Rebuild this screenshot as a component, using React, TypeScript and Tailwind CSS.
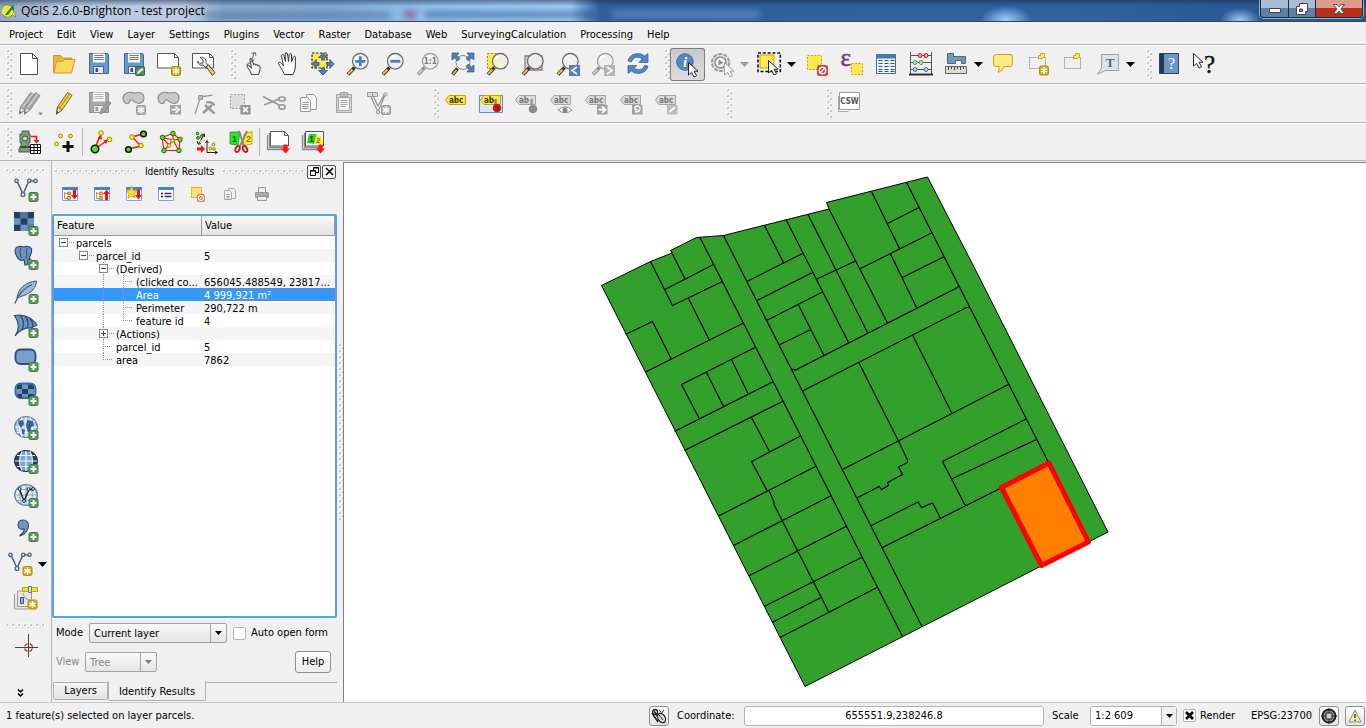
import type { ReactNode } from "react";
import clsx from "clsx";

type Tool = { label: string; icon: ReactNode; menu?: "on" | "off"; pressed?: boolean };

const MENUS = [
  "Project", "Edit", "View", "Layer", "Settings", "Plugins", "Vector", "Raster",
  "Database", "Web", "SurveyingCalculation", "Processing", "Help",
];

/* ---------- icon parts ---------- */

function PlusBadge() {
  return (
    <g>
      <rect x="15" y="14.500" width="9" height="9" rx="1.500" fill="#5b9a5b" stroke="#3f7a45" />
      <path d="M19.500 16v6M16.500 19h6" stroke="#fff" strokeWidth="2" />
    </g>
  );
}

function StarBadge({ gray, x = 14, y = 14 }: { gray?: boolean; x?: number; y?: number }) {
  return (
    <g transform={`translate(${x} ${y})`}>
      <rect x=".5" y=".5" width="9" height="9" rx="1.500" fill={gray ? "#b5b5b5" : "#d4aa14"} stroke={gray ? "#9a9a9a" : "#b58e08"} />
      <path d="M5 1.500v7M2 3.300l6 3.400M8 3.300L2 6.700" stroke="#fff" strokeWidth="1.400" />
    </g>
  );
}

function Cursor({ x, y, gray }: { x: number; y: number; gray?: boolean }) {
  return (
    <path
      transform={`translate(${x} ${y})`}
      d="M0 0v12.500l3-2.700 2.500 4.700 2.500-1.300L5.500 8.700h4z"
      fill="#fff"
      stroke={gray ? "#999" : "#222"}
      strokeWidth="1"
    />
  );
}

function Lens({ gray, children }: { gray?: boolean; children?: ReactNode }) {
  return (
    <g>
      <path d="M8.500 15.500L2 22.500" stroke={gray ? "#8f8f8f" : "#333"} strokeWidth="3.600" />
      <path d="M6.500 17.500L2.200 22" stroke={gray ? "#c8c8c8" : "#f0c040"} strokeWidth="2" />
      <circle cx="14.300" cy="9.300" r="7.800" fill="#f0f1ec" fillOpacity=".85" stroke={gray ? "#a0a0a0" : "#6d6d6d"} strokeWidth="1.300" />
      <path d="M9.500 7a5.500 5.500 0 0 1 6-3.500" fill="none" stroke="#fff" strokeWidth="1.500" />
      {children}
    </g>
  );
}

function Disk({ gray }: { gray?: boolean }) {
  return (
    <g>
      <path d="M2.500 1.500h18l1 1v19h-19z" fill={gray ? "#a8a8a8" : "#6a98cc"} stroke={gray ? "#8d8d8d" : "#44678f"} />
      <path d="M6 1.500h12v9H6z" fill="#f7f7f7" />
      <path d="M7.500 3.500h9M7.500 5.500h9M7.500 7.500h9" stroke={gray ? "#b5b5b5" : "#777"} />
      <path d="M6.500 14.500h10v7h-10z" fill="#e8e8e8" stroke={gray ? "#999" : "#44678f"} />
      <path d="M8.500 16h2.500v4H8.500z" fill={gray ? "#999" : "#34547c"} />
    </g>
  );
}

function Polyline() {
  return (
    <g fill="#f0f0f0" stroke="#48627f" strokeWidth="1.300">
      <path d="M3 3l6 13 6-13h6" fill="none" strokeWidth="1.500" />
      <circle cx="2.500" cy="2.800" r="1.700" />
      <circle cx="9" cy="16.500" r="1.900" />
      <circle cx="15.200" cy="2.800" r="1.700" />
      <circle cx="21.500" cy="2.800" r="1.700" />
    </g>
  );
}

function Tag({ gray, text = "abc", y = 3 }: { gray?: boolean; text?: string; y?: number }) {
  return (
    <g transform={`translate(0 ${y})`}>
      <path
        d="M1.500 6L5 1.500h16.500v9H5z"
        fill={gray ? "#dadada" : "#ffe83d"}
        stroke={gray ? "#a5a5a5" : "#c4a000"}
      />
      <text x="5" y="8.800" fontSize="8" fontWeight="bold" fontFamily="DejaVu Sans Condensed" fill={gray ? "#777" : "#3c3000"}>
        {text}
      </text>
    </g>
  );
}

function Blob() {
  return (
    <path
      d="M4 2.500c4-3 6 0 9-.5 5-1.500 9 .5 9 5s-3.500 6-7 5c-3-.8-4-4-6.500-3-1.500 1-.5 3-2.500 3.500C3 13 1 10 1 7s1-3.500 3-4.500z"
      fill="#c8c8c8"
      stroke="#8f8f8f"
      strokeWidth="1.200"
    />
  );
}

function Node({ x, y, green, r = 2.3 }: { x: number; y: number; green?: boolean; r?: number }) {
  return <circle cx={x} cy={y} r={r} fill={green ? "#59e01c" : "#ffee22"} stroke={green ? "#1c5c08" : "#8a8200"} strokeWidth=".9" />;
}

function Globe({ dark, light }: { dark?: boolean; light?: boolean }) {
  return (
    <g>
      <ellipse cx="12" cy="11" rx="11.300" ry="10.300" fill={light ? "#e9eff6" : dark ? "#24405f" : "#b9cce2"} stroke={dark ? "#1e3550" : "#5b84b5"} strokeWidth="1.300" />
      {dark && <path d="M8 1.500h8q4 9.500 0 19H8q-4-9.500 0-19z" fill="#7da4d4" />}
      <path
        d="M12 1v20M1 11h22M3 5.500h18M3 16.500h18M8 1.500q-5 9.500 0 19M16 1.500q5 9.500 0 19"
        fill="none"
        stroke={light ? "#86acd8" : "#f2f6fb"}
        strokeWidth="1.200"
      />
    </g>
  );
}

function Stacked() {
  return <path d="M1.500 5v14.500H20M3.500 3v14.500h18" fill="none" stroke="#888" strokeWidth="1.300" />;
}

const RedDown = () => <path d="M17.500 14.500h4v4h2.500l-4.500 5-4.500-5h2.500z" fill="#f11" />;

/* ---------- toolbars ---------- */

const FILE_TOOLS: Tool[] = [
  {
    label: "New Project",
    icon: <path d="M3.500 1.500h12l5 5v16h-17zM15.500 1.500v5h5" fill="#fff" stroke="#4d4d4d" />,
  },
  {
    label: "Open Project",
    icon: (
      <g stroke="#c89a2a">
        <path d="M1.500 20.500v-17h7l2 2.500h9v14z" fill="#e3b640" />
        <path d="M2 21L4.500 9.500h6l1.500-2h11L19.500 21z" fill="#fbd762" />
      </g>
    ),
  },
  { label: "Save Project", icon: <Disk /> },
  {
    label: "Save Project As",
    icon: (
      <g>
        <Disk />
        <rect x="13.500" y="14.500" width="9" height="9" rx="1" fill="#4d8a57" stroke="#35693f" />
        <path d="M15 22l1-3 4-3 1.500 1.500-4 3.500z" fill="#fff" />
      </g>
    ),
  },
  {
    label: "New Print Composer",
    icon: (
      <g>
        <path d="M.5 1.500h17l4 4v10.500H.5zM17.500 1.500v4h4" fill="#fff" stroke="#555" />
        <StarBadge />
      </g>
    ),
  },
  {
    label: "Composer Manager",
    icon: (
      <g>
        <path d="M.5 1.500h17l4 4v10.500H.5zM17.500 1.500v4h4" fill="#fff" stroke="#555" />
        <path d="M8 5.500l3 2.500v3l-3 .5L5.500 9c0 3 2.500 5 5.500 4l3 3 2.500-2.500-2.500-3C15 7 11 4.500 8 5.500z" fill="#e6e6e6" stroke="#444" strokeWidth=".9" />
        <path d="M14 14.500l2.500-1.500 6.500 7.500-2.500 3z" fill="#f3cf55" stroke="#444" />
      </g>
    ),
  },
];

const NAV_TOOLS: Tool[] = [
  {
    label: "Touch Zoom and Pan",
    icon: (
      <g fill="none" stroke="#555" strokeWidth="1.100">
        <path d="M10.500 22.500C9.500 19 8 17 6 14.500c0-1.500 1.500-1.500 2.500-.5l2 2L9 7.500c0-1.500 1.500-1.500 2 0l1.500 5c1-1 2-.7 2.300.5 1-.7 2-.3 2.200.8 1.200-.4 1.800.2 2 1.200.6 3-.5 5-1.500 7.500z" fill="#f7f7f7" />
        <path d="M13 1l-2.500 8M10.500 1.500L14 .5l1 3M5.500 13l8-5.500" stroke="#777" />
      </g>
    ),
  },
  {
    label: "Pan Map",
    icon: (
      <path
        d="M8 21.500C6 17 3.500 14 2.500 11.500c0-1.500 2-1.500 3 0l2 2.500L5.500 4c0-1.800 2-1.800 2.500-.5L9.500 9.500 9 2c0-1.800 2.200-1.800 2.500 0l1 7.500L13.300 2.500c.3-1.500 2.200-1.300 2.200.4L15.500 10l1.800-5c.7-1.300 2.400-.8 2.200.8C19 12 20.500 16 17 22.500H8.500z"
        fill="#fff"
        stroke="#333"
      />
    ),
  },
  {
    label: "Pan Map to Selection",
    icon: (
      <g>
        <path d="M1 1h15v15H1z" fill="#ffe950" stroke="#222" strokeWidth="1.200" strokeDasharray="2.500 1.500" />
        <g fill="#4f80b8" stroke="#2d5785" strokeWidth=".8">
          <path d="M12 1l4.500 4.500h-3V8h-3V5.500h-3z" />
          <path d="M12 23l4.500-4.500h-3V16h-3v2.500h-3z" />
          <path d="M.8 12l4.500-4.500v3h2.700v3H5.300v3z" />
          <path d="M23.200 12l-4.500-4.500v3H16v3h2.700v3z" />
        </g>
      </g>
    ),
  },
  { label: "Zoom In", icon: <Lens><path d="M14.300 4.300v10M9.300 9.300h10" stroke="#4b7cb8" strokeWidth="2.800" /></Lens> },
  { label: "Zoom Out", icon: <Lens><path d="M9.300 9.300h10" stroke="#4b7cb8" strokeWidth="2.800" /></Lens> },
  {
    label: "Zoom to Native Pixel Resolution",
    icon: <Lens gray><text x="14.300" y="12.300" textAnchor="middle" fontSize="8" fontFamily="DejaVu Sans Condensed" fontWeight="bold" fill="#777">1:1</text></Lens>,
  },
  {
    label: "Zoom Full",
    icon: (
      <g>
        <circle cx="12" cy="10.500" r="7" fill="#f0f1ec" stroke="#888" />
        <path d="M6.500 16.500L1.500 22.500" stroke="#333" strokeWidth="3.600" />
        <path d="M5.500 18L2 22" stroke="#f0c040" strokeWidth="1.800" />
        <g fill="#4f80b8" stroke="#2d5785" strokeWidth=".7">
          <path d="M1 1h7L6 3.500l3 3-2.500 2.500-3-3L1 8z" />
          <path d="M23 1h-7l2 2.500-3 3L17.500 9l3-3L23 8z" />
          <path d="M23 20h-7l2-2.500-3-3 2.500-2.500 3 3L23 13z" />
        </g>
      </g>
    ),
  },
  {
    label: "Zoom to Selection",
    icon: <g><path d="M1.500 1.500h17v15h-17z" fill="#ffe950" stroke="#a88a00" strokeDasharray="2 1.500" /><Lens /></g>,
  },
  {
    label: "Zoom to Layer",
    icon: <g><path d="M4 4h17v14H4z" fill="#ddd0dd" stroke="#8c7a8c" strokeWidth="1.300" /><Lens /></g>,
  },
  {
    label: "Zoom Last",
    icon: <g><Lens /><path d="M13 13h11v11H13z" fill="#4f80b8" /><path d="M21 15l-5 3.500 5 3.500" fill="none" stroke="#fff" strokeWidth="1.700" /></g>,
  },
  {
    label: "Zoom Next",
    icon: <g><Lens gray /><path d="M13 13h11v11H13z" fill="#b3b3b3" /><path d="M16 15l5 3.500-5 3.500" fill="none" stroke="#fff" strokeWidth="1.700" /></g>,
  },
  {
    label: "Refresh",
    icon: (
      <g fill="#4f86c6" stroke="#2f639f" strokeWidth=".7">
        <path d="M2 9C3 2 13-1 18.500 4L22 1.500v9h-9L16 7C12 4 7 5 5.500 10z" />
        <path d="M22 14c-1 7-11 10-16.500 5L2 21.500v-8h9L8 16c4 3 9 2 10.500-2.500z" />
      </g>
    ),
  },
];

const SquareYellow = ({ x = 3, y = 3, s = 14 }: { x?: number; y?: number; s?: number }) => (
  <rect x={x + 0.5} y={y + 0.5} width={s} height={s} fill="#ffe950" stroke="#c9a30d" strokeDasharray="2 1.500" />
);

const ForbidBadge = () => (
  <g>
    <rect x="13" y="13" width="11" height="11" rx="2.500" fill="#d93a3a" />
    <circle cx="18.500" cy="18.500" r="3.200" fill="none" stroke="#fff" strokeWidth="1.400" />
    <path d="M16.300 20.700l4.400-4.400" stroke="#fff" strokeWidth="1.400" />
  </g>
);

const ATTR_TOOLS: Tool[] = [
  {
    label: "Identify Features",
    pressed: true,
    icon: (
      <g>
        <circle cx="10" cy="10" r="8.300" fill="#5488c4" stroke="#416fa6" />
        <text x="10" y="15" textAnchor="middle" fontSize="15" fontStyle="italic" fontWeight="bold" fontFamily="Liberation Serif" fill="#fff">i</text>
        <Cursor x={13.5} y={10.5} />
      </g>
    ),
  },
  {
    label: "Run Feature Action",
    menu: "off",
    icon: (
      <g>
        <circle cx="10.500" cy="10.500" r="8.600" fill="#e3e3e3" stroke="#9a9a9a" strokeWidth="2" strokeDasharray="4 1.400" />
        <circle cx="10.500" cy="10.500" r="5.500" fill="#f5f5f5" stroke="#8d8d8d" strokeWidth="1.500" />
        <path d="M8.500 7.500l5 3-5 3z" fill="#8d8d8d" />
        <Cursor x={14.5} y={10.5} gray />
      </g>
    ),
  },
  {
    label: "Select Features",
    menu: "on",
    icon: (
      <g>
        <path d="M1 1h22.300v18.500H1z" fill="none" stroke="#111" strokeWidth="1.600" strokeDasharray="3 1.800" />
        <path d="M3 3h14v13H3z" fill="#ffe950" stroke="#c9a30d" />
        <Cursor x={11.5} y={8.5} />
      </g>
    ),
  },
  { label: "Deselect Features", icon: <g><SquareYellow /><ForbidBadge /></g> },
  {
    label: "Select by Expression",
    icon: (
      <g>
        <text x="1.500" y="14" fontSize="25" fontFamily="Liberation Serif" fill="#6a3a78" stroke="#6a3a78" strokeWidth=".5">ε</text>
        <SquareYellow x={12} y={11} s={11} />
      </g>
    ),
  },
  {
    label: "Open Attribute Table",
    icon: (
      <g>
        <path d="M2.500 2.500h19v19h-19z" fill="#eaf2f8" stroke="#4a6f90" />
        <path d="M2.500 2.500h19v4h-19z" fill="#4a7ba8" />
        <path d="M4.500 8.500h4m2 0h4m2 0h4M4.500 11.500h4m2 0h4m2 0h4M4.500 14.500h4m2 0h4m2 0h4M4.500 17.500h4m2 0h4m2 0h4M4.500 19.500h4m2 0h4m2 0h4" stroke="#34536e" />
      </g>
    ),
  },
  {
    label: "Field Calculator",
    icon: (
      <g fill="#f0f0f0">
        <path d="M1.500 0v22M22.500 0v22M1 3.500h22M1 10.500h22M1 17.500h22" stroke="#555" />
        <path d="M0 22.500h24" stroke="#333" strokeWidth="2" />
        <g stroke="#b02020" fill="#f6a0a0"><circle cx="11" cy="3.500" r="2" /><circle cx="17" cy="3.500" r="2" /></g>
        <g stroke="#4a9a50" fill="#b8e8b8"><circle cx="6" cy="10.500" r="2" /><circle cx="12" cy="10.500" r="2" /></g>
        <g stroke="#3c6c9c" fill="#b0d4f0"><circle cx="6" cy="17.500" r="2" /><circle cx="17" cy="17.500" r="2" /></g>
      </g>
    ),
  },
  {
    label: "Measure Line",
    menu: "on",
    icon: (
      <g>
        <path d="M3.500 1.500h6v3h12v7h-4v-3h-6v3h-8z" fill="#7399b8" stroke="#46688a" />
        <path d="M1.500 14.500h21v7h-21z" fill="#d9d9cd" stroke="#666" />
        <path d="M4.500 15v3M7.500 15v2M10.500 15v3M13.500 15v2M16.500 15v3M19.500 15v2" stroke="#444" />
      </g>
    ),
  },
  {
    label: "Map Tips",
    icon: <path d="M5 2.500h14q2.500 0 2.500 2.500v7q0 2.500-2.500 2.500h-6q-1 4.500-6 6 1.500-3 1-6H5q-2.500 0-2.500-2.500V5q0-2.500 2.500-2.500z" fill="#faec80" stroke="#c9a30d" />,
  },
  {
    label: "New Bookmark",
    icon: (
      <g>
        <path d="M3.500 5.500h16v11h-16z" fill="none" stroke="#777" strokeDasharray="1 1" />
        <path d="M12.500 3.500h2v-2h4v3l-2 2h-4z" fill="#ffe950" stroke="#c9a30d" />
        <StarBadge x={13} y={13.5} />
      </g>
    ),
  },
  {
    label: "Show Bookmarks",
    icon: (
      <g>
        <path d="M3.500 5.500h16v11h-16z" fill="none" stroke="#777" strokeDasharray="1 1" />
        <path d="M12.500 3.500h2v-2h4v3l-2 2h-4z" fill="#ffe950" stroke="#c9a30d" />
      </g>
    ),
  },
  {
    label: "Text Annotation",
    menu: "on",
    icon: (
      <g>
        <path d="M5.500 2.500h17v16h-13L1.500 22l4-6z" fill="#dbe4ea" stroke="#9aa3aa" />
        <text x="14" y="15" textAnchor="middle" fontSize="13" fontFamily="Liberation Serif" fontWeight="bold" fill="#666">T</text>
      </g>
    ),
  },
];

const HELP_TOOLS: Tool[] = [
  {
    label: "Help Contents",
    icon: (
      <g>
        <path d="M2.500 1.500h19v20h-19z" fill="#6a96c8" stroke="#2e4660" />
        <path d="M3 2h4v19H3z" fill="#223a54" />
        <text x="14.500" y="17" textAnchor="middle" fontSize="16" fontFamily="Liberation Serif" fill="#fff">?</text>
      </g>
    ),
  },
  {
    label: "What's This?",
    icon: (
      <g>
        <Cursor x={1.5} y={1.5} />
        <text x="12" y="21" fontSize="25" fontFamily="Liberation Serif" fill="#111" stroke="#111" strokeWidth=".4">?</text>
      </g>
    ),
  },
];

const Pencil = ({ gray, x = 0 }: { gray?: boolean; x?: number }) => (
  <g transform={`translate(${x} 0)`} strokeWidth=".9" stroke={gray ? "#888" : "#6b5a1c"}>
    <path d="M4.500 23l1-7L15.500 1.500l4.500 3L10 19z" fill={gray ? "#a6a6a6" : "#f2d43c"} />
    <path d="M7.500 17L17.500 3" stroke={gray ? "#c8c8c8" : "#c9a520"} strokeWidth="1.500" />
    <path d="M5.500 16l4.500 3-5.500 4z" fill={gray ? "#ddd" : "#f1e2c0"} />
    <path d="M4.500 23l.4-2.500 1.600 1z" fill="#333" />
  </g>
);

const EDIT_TOOLS: Tool[] = [
  {
    label: "Current Edits",
    icon: <g><Pencil gray x={-2} /><Pencil gray x={3} /><path d="M21 21.500h5l-2.500 3z" fill="#888" /></g>,
  },
  { label: "Toggle Editing", icon: <Pencil /> },
  {
    label: "Save Layer Edits",
    icon: <g><Disk gray /><path d="M13 23l1.500-5 6.500-8 3 2-6.500 9z" fill="#a0a0a0" stroke="#888" /></g>,
  },
  { label: "Add Feature", icon: <g><Blob /><StarBadge gray /></g> },
  {
    label: "Move Feature",
    icon: <g><Blob /><path d="M13 14h11v9.500H13z" fill="#a3a3a3" /><path d="M14.500 18.700h5M18.500 15.500l3.500 3.200-3.500 3.200" stroke="#fff" strokeWidth="1.800" fill="none" /></g>,
  },
  {
    label: "Node Tool",
    icon: (
      <g stroke="#999" fill="none">
        <path d="M3 23L8.500 6l12-2" strokeWidth="1.300" />
        <rect x="6.500" y="4.500" width="4" height="4" fill="#bbb" />
        <path d="M11 22l9-8M13 14l9.500 8.500" strokeWidth="2.400" />
        <path d="M14 11.500q6-1.500 8.500 3" strokeWidth="2" />
      </g>
    ),
  },
  {
    label: "Delete Selected",
    icon: (
      <g>
        <path d="M3.500 3.500h14v14h-14z" fill="#ddd" stroke="#999" strokeDasharray="2 1.500" />
        <path d="M13.500 14h10v9.500h-10z" fill="#909090" />
        <path d="M16 16.200l5 5M21 16.200l-5 5" stroke="#fff" strokeWidth="1.700" />
      </g>
    ),
  },
  {
    label: "Cut Features",
    icon: (
      <g fill="none" stroke="#999" strokeWidth="1.700">
        <path d="M1 5.500l17 9M2 14l15-6" />
        <ellipse cx="20" cy="8" rx="3.200" ry="2" />
        <ellipse cx="20" cy="16" rx="3.200" ry="2.200" />
      </g>
    ),
  },
  {
    label: "Copy Features",
    icon: (
      <g fill="#f6f6f6" stroke="#999">
        <path d="M9.500 3.500h7l3 3v12h-10z" />
        <path d="M3.500 6.500h7l3 3v11h-10z" />
        <path d="M5.500 11.500h6M5.500 13.500h6M5.500 15.500h6M5.500 17.500h6" />
      </g>
    ),
  },
  {
    label: "Paste Features",
    icon: (
      <g fill="#f6f6f6" stroke="#a5a5a5">
        <path d="M4.500 3.500h15v18h-15z" fill="#d8d8d8" />
        <path d="M6.500 6.500h11v13h-11z" />
        <path d="M8.500 1.500h7v4h-7z" fill="#bbb" />
        <path d="M8.500 9.500h7M8.500 11.500h7M8.500 13.500h7M8.500 15.500h5" />
      </g>
    ),
  },
  {
    label: "Rotate Feature",
    icon: (
      <g fill="#ddd" stroke="#999">
        <path d="M.5 1.500h5v4h-5zM5.500 1.500h5v4h-5z" />
        <path d="M4 6l7 15 7-17M6 5l5 10 6-11" fill="none" strokeWidth="1.300" />
        <circle cx="11" cy="21" r="1.700" /><circle cx="18.500" cy="3.500" r="1.700" />
        <StarBadge gray />
      </g>
    ),
  },
];

const LABEL_TOOLS: Tool[] = [
  { label: "Layer Labeling Options", icon: <Tag /> },
  {
    label: "Highlight Pinned Labels",
    icon: (
      <g>
        <path d="M.5 4.500h23v17H.5z" fill="#dce8f6" stroke="#5590e0" />
        <Tag text="ab" />
        <path d="M16.500 8v6" stroke="#888" strokeWidth="2.500" /><circle cx="18" cy="17" r="4.300" fill="#b81818" />
      </g>
    ),
  },
  {
    label: "Pin/Unpin Labels",
    icon: <g><Tag gray text="ab" /><path d="M17.500 8v6" stroke="#999" strokeWidth="2.500" /><circle cx="19" cy="18" r="4.300" fill="#8d8d8d" /></g>,
  },
  {
    label: "Show/Hide Labels",
    icon: <g><Tag gray /><path d="M9 19q7-6.500 14 0-7 5.500-14 0z" fill="#fff" stroke="#888" /><circle cx="16" cy="19" r="2.500" fill="#888" /></g>,
  },
  {
    label: "Move Label",
    icon: <g><Tag gray /><path d="M13 14h10.500v9.500H13z" fill="#a3a3a3" /><path d="M14.500 18.700h5M18 15.500l3.500 3.200-3.500 3.200" stroke="#fff" strokeWidth="1.700" fill="none" /></g>,
  },
  {
    label: "Rotate Label",
    icon: <g><Tag gray /><path d="M13 14h10.500v9.500H13z" fill="#a3a3a3" /><path d="M16 21q5 0 5-3.500a2.500 2.500 0 0 0-5 0q0 1.500 2.500 1.500" stroke="#fff" strokeWidth="1.400" fill="none" /></g>,
  },
  {
    label: "Change Label",
    icon: <g><Tag gray /><path d="M13 14h10.500v9.500H13z" fill="#bcbcbc" /><path d="M15 21.500l1-2.500 4-3.500 1.500 1.500-4 3.500z" fill="#fff" /></g>,
  },
];

const CSW_TOOLS: Tool[] = [
  {
    label: "MetaSearch",
    icon: (
      <g>
        <path d="M1.500 5v15.500h10" fill="#fff" stroke="#aaa" />
        <path d="M2.500 1.500h20v17h-20z" fill="#fff" stroke="#999" />
        <text x="12.500" y="13" textAnchor="middle" fontSize="8" fontFamily="DejaVu Sans Condensed" fontWeight="bold" fill="#555">CSW</text>
      </g>
    ),
  },
];

const SURVEY_TOOLS: Tool[][] = [
  [
    {
      label: "Load Fieldbook",
      icon: (
        <g>
          <path d="M5 1h7v3h1v9h-2l3 6v3H2v-3l3-6H3V4h2z" fill="#7d9a7d" stroke="#4a644a" />
          <circle cx="8" cy="8.500" r="2.500" fill="#c8dcc8" stroke="#3c523c" />
          <path d="M3 17h10" stroke="#3c523c" strokeWidth="2" />
          <path d="M14 6.500h5.500V11" fill="none" stroke="#f11" strokeWidth="1.700" />
          <path d="M16.500 10h6l-3 3.500z" fill="#f11" />
          <path d="M13.500 14.500h10v9h-10zM13.500 17.500h10M13.500 20.500h10M17 14.500v9M20.500 14.500v9" fill="#fff" stroke="#111" />
        </g>
      ),
    },
    {
      label: "Add New Point",
      icon: <g><Node x={8.5} y={6} r={1.9} /><Node x={18.5} y={6} r={1.9} /><Node x={4.5} y={14} r={1.9} /><path d="M16 11v11M10.500 16.500h11" stroke="#111" strokeWidth="3" /></g>,
    },
  ],
  [
    {
      label: "Single Point Calculations",
      icon: (
        <g>
          <path d="M6 18l5-12M7 18l12-8" stroke="#f11" strokeWidth="1.500" />
          <path d="M8.500 8.500L12 4l1 5.500zM14.500 10.500l5-1.500-2.500 5z" fill="#f11" />
          <Node x={12} y={3} /><Node x={20.5} y={9.5} />
          <circle cx="6" cy="19" r="3.700" fill="#59e01c" stroke="#111" strokeWidth="1.600" />
        </g>
      ),
    },
    {
      label: "Traverse Calculations",
      icon: (
        <g>
          <path d="M19 4L8 7l9 9-12 3" fill="none" stroke="#f11" strokeWidth="1.500" />
          <circle cx="19.500" cy="4" r="2.800" fill="#59e01c" stroke="#111" strokeWidth="1.500" />
          <circle cx="4.500" cy="19.500" r="2.800" fill="#59e01c" stroke="#111" strokeWidth="1.500" />
          <Node x={8} y={7} /><Node x={17} y={15.5} />
        </g>
      ),
    },
    {
      label: "Network Adjustment",
      icon: (
        <g>
          <path d="M14 3.500L3 7.500l2 13h15l1-11zM3 7.500l11 2.500 6 11M14 3.500V10l7-1M14 10l-4 5-7-7.500M10 15l-5 5.500" fill="none" stroke="#f11" strokeWidth="1.200" />
          <Node x={14} y={3.5} green /><Node x={3.5} y={7.5} green /><Node x={21} y={9.5} green /><Node x={5} y={20.5} green /><Node x={20} y={20.5} green />
          <Node x={13.5} y={10.5} r={1.8} /><Node x={10} y={15.5} r={1.8} />
        </g>
      ),
    },
    {
      label: "Coordinate Transformation",
      icon: (
        <g>
          <Node x={3.5} y={3.5} green r={1.4} /><Node x={7.5} y={6.5} green r={1.4} /><Node x={4} y={8} green r={1.4} />
          <path d="M4.500 14l6-10M10.500 4l-3 .5M10.500 4v3M3 11l1 3.500 3-1" stroke="#222" fill="none" strokeDasharray="3 1" />
          <path d="M3 17.500h4V15l4 4-4 4v-2.500H3z" fill="#f11" />
          <path d="M13 11v11.500h10M11.500 13l1.500-2.500 1.500 2.500M21 21l2.500 1.500L21 24" stroke="#222" fill="none" />
          <Node x={19.5} y={14.5} r={1.5} /><Node x={16.5} y={18.5} r={1.5} /><Node x={20} y={19} r={1.3} />
        </g>
      ),
    },
    {
      label: "Polygon Division",
      icon: (
        <g>
          <path d="M1 2h10l-2 13-8-1z" fill="#28e828" stroke="#1a7a1a" strokeWidth=".7" />
          <path d="M15 4l8-2.500V14l-9 1.500z" fill="#ffee22" stroke="#a09000" strokeWidth=".7" />
          <text x="3" y="11.500" fontSize="9" fontWeight="bold" fontFamily="Liberation Sans" fill="#0c5c0c">1</text>
          <text x="17" y="11.500" fontSize="9" fontWeight="bold" fontFamily="Liberation Sans" fill="#8a7a00">2</text>
          <path d="M10 1l5 15M18 1l-7 15" stroke="#888" strokeWidth="2" />
          <ellipse cx="8.500" cy="19" rx="2" ry="3.300" transform="rotate(25 8.500 19)" fill="none" stroke="#d01010" strokeWidth="1.800" />
          <ellipse cx="16" cy="19" rx="2" ry="3.300" transform="rotate(-25 16 19)" fill="none" stroke="#d01010" strokeWidth="1.800" />
        </g>
      ),
    },
  ],
  [
    {
      label: "Plot by Template",
      icon: <g><Stacked /><path d="M4.500 1.500h14l4 4v10.500h-18zM18.500 1.500v4h4" fill="#fff" stroke="#555" /><RedDown /></g>,
    },
    {
      label: "Batch Plotting",
      icon: (
        <g>
          <Stacked />
          <path d="M4.500 1.500h18v14.500h-18z" fill="#fff" stroke="#555" />
          <path d="M8 4h8l-3 10-7-1z" fill="#28d828" /><path d="M15 5l5 1 2 8h-8z" fill="#ffee22" />
          <text x="8" y="12" fontSize="9" fontWeight="bold" fontFamily="Liberation Sans" fill="#0c5c0c">1</text>
          <text x="15" y="13" fontSize="8" fontWeight="bold" fontFamily="Liberation Sans" fill="#7a6a00">2</text>
          <RedDown />
        </g>
      ),
    },
  ],
];

const LAYER_TOOLS: Tool[] = [
  { label: "Add Vector Layer", icon: <g><Polyline /><PlusBadge /></g> },
  {
    label: "Add Raster Layer",
    icon: (
      <g>
        <path d="M0 0h20v19H0z" fill="#6e94c4" />
        <path d="M0 0h6.500v6.300H0zM13.500 0H20v6.300h-6.500zM6.500 6.300h7v6.400h-7zM0 12.700h6.500V19H0z" fill="#24405f" />
        <path d="M6.500 0h7v6.300h-7zM13.500 12.700H20V19h-6.500z" fill="#4e76a8" />
        <PlusBadge />
      </g>
    ),
  },
  {
    label: "Add PostGIS Layer",
    icon: (
      <g>
        <path d="M2 2C5-.5 8 .5 9.500 1c3-1.500 7-.5 8 2 .5 4-1 6.500-2.500 9l1.500 1-2.500 1V18.500l-3 .5-1-5.500-3 1C2 12 0 5 2 2z" fill="#6e94c4" stroke="#2e4c74" strokeWidth="1.200" />
        <path d="M7 2q-2 4-.5 7 .5 2 1.500 3M13.500 2q-2.500 3-.5 6.500l-1.500 4" fill="none" stroke="#2e4c74" />
        <PlusBadge />
      </g>
    ),
  },
  {
    label: "Add SpatiaLite Layer",
    icon: (
      <g>
        <path d="M3 18C4 9 11 2 22.500 1 22 7 19 13 7 16.500z" fill="#9db9da" stroke="#3b5a80" />
        <path d="M.8 23.500C4 15 10 8 18 4.500" fill="none" stroke="#3b5a80" strokeWidth="1.200" />
        <PlusBadge />
      </g>
    ),
  },
  {
    label: "Add MSSQL Layer",
    icon: (
      <g stroke="#2e4c74">
        <path d="M.5 1.500C9 0 18 3 23 11l-6 3c-7-1-12 3-16 8C6 15 5 8 .5 1.500z" fill="#6e94c4" strokeWidth="1.200" />
        <path d="M6 1.500q6 6 2 14.500M11 2.500q5 5 2 11.500M16 5q4 4 2 9" fill="none" strokeWidth="1.300" />
        <PlusBadge />
      </g>
    ),
  },
  {
    label: "Add Oracle Spatial Layer",
    icon: <g><rect x="1.500" y="1.500" width="20" height="14.500" rx="5" fill="#7b9fcd" stroke="#2e4c74" strokeWidth="1.800" /><PlusBadge /></g>,
  },
  {
    label: "Add Oracle GeoRaster Layer",
    icon: (
      <g>
        <rect x="1.500" y="1.500" width="20" height="14.500" rx="5" fill="#6e94c4" stroke="#3d6aa3" strokeWidth="1.800" />
        <path d="M8 7h6v5H8zM3 4q1-1.500 2.500-1.500H8V7H3zM14 2.500h3.500Q20 3 20 5v2h-6zM3 12h5v4H5.500Q3.500 15 3 12zM14 12h6q-1 4-3 4h-3z" fill="#24405f" />
        <PlusBadge />
      </g>
    ),
  },
  {
    label: "Add WMS/WMTS Layer",
    icon: (
      <g>
        <Globe />
        <path d="M4 5l5-1 1 4-3 4-2-3zM8 13l3 1-1 5-2-2zM13 4l6 1 1 5-3 1-1 6-2-1-2-6z" fill="#3d6290" />
        <PlusBadge />
      </g>
    ),
  },
  { label: "Add WCS Layer", icon: <g><Globe dark /><PlusBadge /></g> },
  {
    label: "Add WFS Layer",
    icon: (
      <g>
        <Globe light />
        <path d="M5.500 5.500L10 17l5-11.500h4" fill="none" stroke="#222" strokeWidth="1.500" />
        <g fill="#fff" stroke="#222"><circle cx="5.500" cy="5" r="1.400" /><circle cx="10" cy="17" r="1.400" /><circle cx="14.500" cy="5" r="1.400" /><circle cx="19" cy="5" r="1.400" /></g>
        <PlusBadge />
      </g>
    ),
  },
  {
    label: "Add Delimited Text Layer",
    icon: (
      <g>
        <path d="M6 17q4.500-2.500 4-6-6 1-6-4.500Q4.500 2 9 2q5.500 0 5.500 6Q14 15 6 18z" fill="#6e94c4" stroke="#2e4c74" strokeWidth="1.100" />
        <PlusBadge />
      </g>
    ),
  },
  { label: "New Shapefile Layer", menu: "on", icon: <g><Polyline /><StarBadge x={14.5} y={14} /></g> },
  {
    label: "New GPX Layer",
    icon: (
      <g>
        <path d="M.5 8v15H14M3.500 5v15.500h14V5z" fill="#e6e6e6" stroke="#999" />
        <path d="M6.500 11.500h3v6h-3z" fill="#9db9da" stroke="#34547c" />
        <path d="M10 10q1 3 4 3M9 7q1 7 7 7" fill="none" stroke="#aaa" />
        <path d="M8.500 1.500h6v4h-6zM17.500 1.500h6v4h-6z" fill="#eee810" stroke="#b5ad00" />
        <path d="M14.500.5h3v6h-3z" fill="#ddd" stroke="#777" />
        <StarBadge x={13.5} y={13.5} />
      </g>
    ),
  },
];

function Icon({ children }: { children: ReactNode }) {
  return <svg viewBox="0 0 24 24" className="h-6 w-6 shrink-0 overflow-visible" aria-hidden>{children}</svg>;
}

function DropArrow({ off }: { off?: boolean }) {
  return <svg viewBox="0 0 9 5" className="h-[5px] w-[9px]" aria-hidden><path d="M0 0h9L4.500 5z" fill={off ? "#999" : "#000"} /></svg>;
}

function Grip({ className }: { className?: string }) {
  return (
    <svg className={className} aria-hidden>
      <rect width="100%" height="100%" fill="url(#grip-dots)" />
    </svg>
  );
}

function ToolGroup({ tools }: { tools: Tool[] }) {
  return (
    <div className="flex items-center">
      {tools.map((t) => (
        <div key={t.label} className="flex items-center">
          <button
            type="button"
            aria-label={t.label}
            className={clsx(
              "flex h-[33px] w-[35px] items-center justify-start pl-[5px]",
              t.pressed && "rounded-[3px] bg-gradient-to-b from-[#c9c9c9] to-[#dcdcdc] shadow-[inset_0_0_0_1px_#7d7d7d]",
            )}
          >
            <Icon>{t.icon}</Icon>
          </button>
          {t.menu && (
            <button type="button" aria-label={`${t.label} options`} className="flex h-[33px] w-3 items-center">
              <DropArrow off={t.menu === "off"} />
            </button>
          )}
        </div>
      ))}
    </div>
  );
}

/* ---------- identify results ---------- */

type Row = {
  name: string;
  value?: string;
  depth: number;
  box?: "-" | "+";
  pipes?: number[]; // guide columns that run through the full row
  last?: number; // guide column that stops at this row
};

const ROWS: Row[] = [
  { name: "parcels", depth: 0, box: "-" },
  { name: "parcel_id", value: "5", depth: 1, box: "-" },
  { name: "(Derived)", depth: 2, box: "-", pipes: [2] },
  { name: "(clicked co...", value: "656045.488549, 23817...", depth: 3, pipes: [2, 3] },
  { name: "Area", value: "4 999,921 m²", depth: 3, pipes: [2, 3] },
  { name: "Perimeter", value: "290,722 m", depth: 3, pipes: [2, 3] },
  { name: "feature id", value: "4", depth: 3, pipes: [2], last: 3 },
  { name: "(Actions)", depth: 2, box: "+", pipes: [2] },
  { name: "parcel_id", value: "5", depth: 2, pipes: [2] },
  { name: "area", value: "7862", depth: 2, last: 2 },
];

function Guides({ row }: { row: Row }) {
  const w = 22 + row.depth * 20;
  const x = 9 + row.depth * 20;
  return (
    <svg width={w} height="13" viewBox={`0 0 ${w} 13`} className="shrink-0" aria-hidden>
      <g stroke="#999" strokeDasharray="1 1" fill="none">
        {row.pipes?.map((p) => <path key={p} d={`M${p * 20 + 9.5} 0v13`} />)}
        {row.last !== undefined && <path d={`M${row.last * 20 + 9.5} 0v6.500`} />}
        <path d={`M${x} 6.500h${row.box ? 11 : 9}`} />
      </g>
      {row.box && (
        <g>
          <rect x={x - 3.5} y="2.500" width="8" height="8" fill="#fff" stroke="#888" />
          <path d={`M${x - 2} 6.500h5`} stroke="#444" />
          {row.box === "+" && <path d={`M${x + 0.5} 4v5`} stroke="#444" />}
        </g>
      )}
    </svg>
  );
}

function ResultsTable() {
  const head = "h-5 border-r border-b border-[#999] bg-gradient-to-b from-[#fbfbfb] to-[#e2e2e2] p-0 pl-[3px] text-left font-normal";
  return (
    <div className="min-h-0 flex-1 rounded-[2px] border-2 border-[#559fee] bg-white">
      <table className="w-full table-fixed border-separate border-spacing-0 leading-[13px]">
        <colgroup>
          <col className="w-[148px]" />
          <col />
        </colgroup>
        <thead>
          <tr>
            <th className={head}>Feature</th>
            <th className={head}>Value</th>
          </tr>
        </thead>
        <tbody>
          {ROWS.map((r, i) => (
            <tr key={i} className={clsx("h-[13px]", r.name === "Area" ? "bg-[#3399ff] text-white" : i % 2 === 1 && "bg-[#f5f5f5]")}>
              <td className="p-0">
                <div className="flex h-[13px] whitespace-nowrap">
                  <Guides row={r} />
                  <span className="pt-px">{r.name}</span>
                </div>
              </td>
              <td className={clsx("p-0 pl-[2px]", r.name === "Area" && "outline-1 -outline-offset-1 outline-dotted outline-[#b8763a]")}>
                <div className="h-[13px] pt-px whitespace-nowrap">{r.value}</div>
              </td>
            </tr>
          ))}
        </tbody>
      </table>
    </div>
  );
}

const WinIcon = ({ children }: { children?: ReactNode }) => (
  <g>
    <path d="M.5 1.500h15v13H.5z" fill="#fff" stroke="#7ea6dc" />
    <path d="M0 1h16v3H0z" fill="#4580e0" />
    {children}
  </g>
);

const TreeBits = () => (
  <g fill="#f8b060" stroke="#b06820" strokeWidth=".7">
    <path d="M2.500 6v6.500H6M2.500 7.500H6" fill="none" />
    <path d="M5.500 6h3v3h-3zM5.500 10.500h3v3h-3z" />
  </g>
);

const DOCK_TOOLS: { label: string; off?: boolean; icon: ReactNode }[] = [
  { label: "Expand Tree", icon: <WinIcon><TreeBits /><path d="M11 3.500h3V9h2l-3.500 4.500L9 9h2z" fill="#f01010" /></WinIcon> },
  { label: "Collapse Tree", icon: <WinIcon><TreeBits /><path d="M11 14h3V8h2l-3.500-4.500L9 8h2z" fill="#f01010" /></WinIcon> },
  {
    label: "Expand New Results by Default",
    icon: <WinIcon><path d="M11 3.500h3V9h2l-3.500 4.500L9 9h2z" fill="#f01010" /><path d="M5.500 0l1.700 4 4 .5-3 3 .8 4.500-3.500-2-3.500 2 .8-4.500-3-3 4-.5z" fill="#ffd820" stroke="#d09000" strokeWidth=".7" /></WinIcon>,
  },
  {
    label: "Open Form",
    icon: <WinIcon><path d="M3 7.500h2M3 10.500h2" stroke="#222" strokeWidth="1.500" /><path d="M6.500 7.500h7M6.500 10.500h7" stroke="#336" strokeWidth="1.300" /></WinIcon>,
  },
  {
    label: "Clear Results",
    icon: (
      <g>
        <path d="M1.500 1.500h10v10h-10z" fill="#ffe070" stroke="#c9a30d" strokeDasharray="2 1" />
        <rect x="7" y="8" width="8" height="8" rx="2" fill="#e08080" />
        <circle cx="11" cy="12" r="2.600" fill="none" stroke="#fff" />
        <path d="M9.500 13.500l3-3" stroke="#fff" />
      </g>
    ),
  },
  {
    label: "Copy Feature",
    off: true,
    icon: <g fill="#f4f4f4" stroke="#aaa"><path d="M6.500 2.500h5l2 2v8h-7z" /><path d="M2.500 4.500h5l2 2v7h-7zM4 8.500h4M4 10.500h4M4 12h4" /></g>,
  },
  {
    label: "Print Response",
    off: true,
    icon: <g stroke="#999"><path d="M4.500 1.500h7v5h-7z" fill="#eee" /><path d="M1.500 6.500h13v5h-13z" fill="#aaa" /><path d="M3.500 10.500h9v4h-9z" fill="#eee" /></g>,
  },
];

function SelectBox({ id, options, disabled, className }: { id: string; options: string[]; disabled?: boolean; className: string }) {
  return (
    <div className={clsx("relative flex h-5 rounded-[2px] border border-[#a3a3a3] bg-gradient-to-b from-[#fafafa] to-[#e4e4e4]", className)}>
      <select id={id} disabled={disabled} className="w-full appearance-none bg-transparent pt-px pl-1 leading-4 text-inherit outline-none disabled:opacity-100">
        {options.map((o) => <option key={o}>{o}</option>)}
      </select>
      <span className="pointer-events-none absolute inset-y-0 right-0 flex w-4 items-center justify-center border-l border-[#a3a3a3]">
        <svg viewBox="0 0 7 4" className="h-1 w-[7px]" aria-hidden><path d="M0 0h7L3.500 4z" fill={disabled ? "#777" : "#000"} /></svg>
      </span>
    </div>
  );
}

function IdentifyPanel() {
  const corner = "flex h-[14px] w-[14px] items-center justify-center rounded-[2px] border border-[#555] bg-[#f8f8f8]";
  return (
    <section className="flex w-[286px] shrink-0 flex-col pr-px">
      <div className="flex h-[21px] items-center gap-2 pr-px pl-[2px]">
        <Grip className="h-[5px] min-w-0 flex-1" />
        <h2 className="text-[10px]">Identify Results</h2>
        <Grip className="h-[5px] min-w-0 flex-1" />
        <div className="-ml-2 flex gap-px pl-[2px]">
          <button type="button" aria-label="Float panel" className={corner}>
            <svg viewBox="0 0 9 9" className="h-[9px] w-[9px]" aria-hidden><path d="M3.500 3V.5h5v5H6M3 1h6M.5 3.500h5v5h-5zM0 4h6" fill="none" stroke="#000" /></svg>
          </button>
          <button type="button" aria-label="Close panel" className={corner}>
            <svg viewBox="0 0 9 9" className="h-[9px] w-[9px]" aria-hidden><path d="M1 1l7 7M8 1L1 8" stroke="#000" strokeWidth="1.600" /></svg>
          </button>
        </div>
      </div>
      <div className="mb-2 flex h-6 items-center pl-[2px]">
        {DOCK_TOOLS.map((t) => (
          <button key={t.label} type="button" aria-label={t.label} disabled={t.off} className="flex w-8 justify-center">
            <svg viewBox="0 0 16 16" className="h-4 w-4" aria-hidden>{t.icon}</svg>
          </button>
        ))}
      </div>
      <ResultsTable />
      <div className="mt-[5px] flex h-5 items-center pl-1">
        <label htmlFor="mode" className="w-[33px]">Mode</label>
        <SelectBox id="mode" options={["Current layer", "Top down", "Layer selection"]} className="w-[138px]" />
        <label className="ml-[6px] flex items-center gap-[5px]">
          <input type="checkbox" className="h-[13px] w-[13px] appearance-none rounded-[2px] border border-[#b5b5b5] bg-white" />
          Auto open form
        </label>
      </div>
      <div className="mt-2 flex h-[22px] items-center pl-1 text-[#8a8a8a]">
        <label htmlFor="view" className="w-[29px]">View</label>
        <SelectBox id="view" disabled options={["Tree", "Table", "Graph"]} className="w-[72px]" />
        <button type="button" className="mr-[6px] ml-auto h-[22px] w-9 rounded-[3px] border border-[#8f8f8f] bg-gradient-to-b from-white to-[#ececec] text-black">Help</button>
      </div>
      <div role="tablist" className="mt-2 flex h-[21px] items-start">
        <button type="button" role="tab" aria-selected="false" className="mt-px ml-px h-[18px] w-[55px] rounded-b-[2px] border border-[#b0b0b0] bg-gradient-to-b from-[#f4f4f4] to-[#e4e4e4] leading-4">Layers</button>
        <button type="button" role="tab" aria-selected="true" className="h-5 w-[98px] rounded-b-[2px] border border-t-0 border-[#b0b0b0] pt-[2px]">Identify Results</button>
        <span className="mt-px flex-1 border-t border-[#b0b0b0]" />
      </div>
    </section>
  );
}

/* ---------- map ---------- */

const PARCEL_LINES = [
  "M700 237.500L902.500 636.500",
  "M723.500 235.500L922 626.500",
  "M650.500 261.500L672.500 305.500L722.500 281.500",
  "M672 253L685 279",
  "M665 289.500L713.500 264.500",
  "M688.500 298.500L709 339.500",
  "M626.500 334L652.500 321.500L671 358.500",
  "M645.500 372L743.500 323",
  "M755 347.500L681.500 384.500L699.500 419",
  "M706.500 372.500L723.500 406.500",
  "M731.500 359.500L748 393.500",
  "M674.500 431.500L772.500 382",
  "M782.500 401.500L684.500 450.500",
  "M751.500 417.500L769.500 451.500",
  "M800.500 436L751.500 461.500L767 490.500",
  "M718.500 516L815.500 466.500",
  "M769 490.500L774 502V504.500L829 612.500",
  "M733.500 545.500L830.500 496",
  "M748.500 576L846 526.500",
  "M764 606.500L861.500 557.500",
  "M772 622.500L821 597.500",
  "M780 637.500L877 587.500",
  "M764.500 225.500L783.500 262.500",
  "M786 219.500L848.500 342.500",
  "M747 281.500L802.500 253.500",
  "M757 300.500L812.500 272.500",
  "M766.500 320.500L822.500 292",
  "M798.500 305L824 355.500",
  "M779 345L811 329.500",
  "M808 214.500L867.500 332.500",
  "M829 209L887.500 323",
  "M817 279L855.500 261",
  "M791.500 369L795.500 370L957.500 287.500L958.500 285.500",
  "M871.500 191.500L899.500 248.500",
  "M906.500 182.500L1048.500 462.500",
  "M887.500 223.500L919 207.500",
  "M860.500 268.500L931.500 233",
  "M890.500 254L916.500 307.500",
  "M902.500 277.500L943.500 257",
  "M802.500 391L966.500 307.500H970",
  "M912.500 335L952 413.500",
  "M858.500 362L898.500 441L907.500 460V462.500L898.500 467L902.500 474.500L887.500 482.500L888.500 485.500L881.500 489.500L879 486.500L857 498",
  "M1008.500 384.500L842.500 469.500",
  "M1026 419L942.500 461.500L965.500 506",
  "M951.500 479L1036.500 439.500",
  "M882.500 547.500L1000 488.500",
  "M871.500 525.500L918 502L921.500 507.500L932.500 503L940.500 518",
];

function MapCanvas() {
  return (
    <main className="mt-px flex min-w-0 flex-1 border-t border-l border-[#7f7f7f] bg-white">
      <svg viewBox="344 163 1022 539" className="h-full w-full" role="img" aria-label="parcels">
        <path
          d="M601.500 285.500L650.500 261.500L672 253L670.500 250.500L696.500 237.500L723.500 235.500L829 209L826.500 202.500L927.500 177L973.500 266L1108 532L850 663.500L805 686.500Z"
          fill="#33a02c"
          stroke="#000"
        />
        <path d={PARCEL_LINES.join("")} fill="none" stroke="#000" strokeWidth="1.200" />
        <path d="M1001.500 487.500L1049 463L1088.500 542L1041.500 565.500Z" fill="#ff8000" stroke="#f00" strokeWidth="5" strokeLinejoin="round" />
      </svg>
    </main>
  );
}

/* ---------- window ---------- */

function TitleBar() {
  return (
    <header className="relative flex h-[22px] shrink-0 items-center overflow-hidden border-b border-[#33475f] bg-[linear-gradient(90deg,#8fa6c4_0,#b9c9de_60px,#bccbdf_185px,#86a6cc_225px,#7fa8d6_330px,#93c0ee_430px,#9ccbf8_570px,#2f5f9c_600px,#2f629d_78%,#28558c_100%)] pl-1">
      <div className="pointer-events-none absolute inset-0 bg-[radial-gradient(ellipse_26px_14px_at_1006px_20px,#9cd0ff,transparent),radial-gradient(ellipse_20px_12px_at_1240px_20px,#9cc8f8,transparent),linear-gradient(180deg,rgba(20,40,70,.5),transparent_30%)]" />
      <div aria-hidden className="pointer-events-none absolute top-[13px] left-[205px] h-[5px] w-[185px] bg-[#2b4a70]/50 blur-[3px]" />
      <div aria-hidden className="pointer-events-none absolute top-[11px] left-[404px] h-[7px] w-[12px] bg-[#8a2a50]/60 blur-[3px]" />
      <div aria-hidden className="pointer-events-none absolute top-[12px] left-[425px] h-[5px] w-[170px] bg-[#163a68]/60 blur-[3px]" />
      <div aria-hidden className="pointer-events-none absolute top-[10px] left-[612px] h-[9px] w-[148px] bg-[#5f8cc0]/70 blur-[3px]" />
      <svg viewBox="0 0 16 16" className="relative -ml-[2px] h-4 w-[14px]" aria-hidden>
        <path d="M7 1a7 7 0 1 0 5 11l3 3v-4l-2-2q1-4-1-6z" fill="#e9e94a" stroke="#7c8c1c" />
        <path d="M4 12L13 1v6l-2-1-4 6z" fill="#2c8c3c" stroke="#155520" strokeWidth=".6" />
      </svg>
      <h1 className="relative pl-[5px] font-['Open_Sans','Noto_Sans',sans-serif] text-[12px] leading-4 text-black">QGIS 2.6.0-Brighton - test project</h1>
      <div className="relative mr-[3px] ml-auto flex h-[18px] self-start overflow-hidden rounded-b-[4px] border border-t-0 border-[#1d2c40] shadow-[0_0_0_1px_rgba(255,255,255,.5)]">
        <button type="button" aria-label="Minimize" className="flex w-7 items-center justify-center border-r border-[#1d2c40] bg-gradient-to-b from-[#a9bdd4] from-45% to-[#5f7fa5] to-50%">
          <svg viewBox="0 0 12 5" className="mt-1 h-[5px] w-3" aria-hidden><path d="M.5.5h11v4H.5z" fill="#fff" stroke="#444" /></svg>
        </button>
        <button type="button" aria-label="Restore" className="flex w-[27px] items-center justify-center border-r border-[#1d2c40] bg-gradient-to-b from-[#a9bdd4] from-45% to-[#5f7fa5] to-50%">
          <svg viewBox="0 0 12 12" className="h-3 w-3" aria-hidden><path d="M3.500.5h8v8h-2v3h-9v-8h3z" fill="#fff" stroke="#444" /><path d="M3.500 6h3v2.500h-3z" fill="#6f8db0" stroke="#444" /></svg>
        </button>
        <button type="button" aria-label="Close" className="flex w-[46px] items-center justify-center bg-gradient-to-b from-[#dd9c8d] from-45% to-[#b8301a] to-50%">
          <svg viewBox="0 0 12 10" className="h-[10px] w-3" aria-hidden><path d="M.5.5h3.500L6 2.800 8 .5h3.500L8 5l3.500 4.500H8L6 7.200 4 9.500H.5L4 5z" fill="#fff" stroke="#444" strokeWidth=".9" /></svg>
        </button>
      </div>
    </header>
  );
}

function StatusBar() {
  const iconBtn = "flex h-5 w-5 items-center justify-center rounded-[3px] border border-[#8f8f8f] bg-gradient-to-b from-white to-[#e4e4e4]";
  return (
    <footer className="flex h-[26px] shrink-0 items-center border-t border-[#c8c8c8] pr-px pl-[6px]">
      <p>1 feature(s) selected on layer parcels.</p>
      <button type="button" aria-label="Toggle extents and mouse position" className={clsx(iconBtn, "mr-2 ml-auto")}>
        <svg viewBox="0 0 16 16" className="h-4 w-4" aria-hidden>
          <path d="M1 5l6 9M3 3l6 9" stroke="#222" strokeWidth="1.500" />
          <circle cx="4" cy="4" r="2.500" fill="none" stroke="#222" strokeWidth="1.300" />
          <ellipse cx="10.500" cy="10" rx="3.500" ry="5" transform="rotate(-35 10.500 10)" fill="#ddd" stroke="#222" strokeWidth="1.300" />
          <path d="M8 7l4 5M13 2l-3 4M8 1.500l2 3" stroke="#222" />
        </svg>
      </button>
      <label htmlFor="coord" className="w-[67px]">Coordinate:</label>
      <input id="coord" defaultValue="655551.9,238246.8" className="h-5 w-[300px] rounded-[3px] border border-[#b0b0b0] bg-white text-center outline-none" />
      <label htmlFor="scale" className="ml-2 w-[38px]">Scale</label>
      <div className="relative h-5 w-[87px]">
        <input id="scale" defaultValue="1:2 609" className="h-5 w-full rounded-[3px] border border-[#b0b0b0] bg-white pl-1 outline-none" />
        <button type="button" aria-label="Scale list" className="absolute inset-y-px right-px flex w-[15px] items-center justify-center border-l border-[#b0b0b0] bg-[#f0f0f0]">
          <svg viewBox="0 0 7 4" className="h-1 w-[7px]" aria-hidden><path d="M0 0h7L3.500 4z" fill="#000" /></svg>
        </button>
      </div>
      <label className="ml-[6px] flex w-[68px] items-center gap-1">
        <span className="relative flex h-[13px] w-[13px]">
          <input type="checkbox" defaultChecked className="h-[13px] w-[13px] appearance-none rounded-[2px] border border-[#b5b5b5] bg-white" />
          <svg viewBox="0 0 13 13" className="pointer-events-none absolute inset-0" aria-hidden><path d="M3 3l7 7M10 3l-7 7" stroke="#000" strokeWidth="2.800" /></svg>
        </span>
        Render
      </label>
      <span className="w-[68px]">EPSG:23700</span>
      <button type="button" aria-label="CRS status" className={iconBtn}>
        <svg viewBox="0 0 16 16" className="h-4 w-4" aria-hidden>
          <circle cx="8" cy="8" r="6.500" fill="#999" stroke="#222" strokeWidth="2" />
          <path d="M8 0v16M0 8h16" stroke="#222" />
          <path d="M5 5h6v6H5z" fill="#ccc" stroke="#222" />
        </svg>
      </button>
      <button type="button" aria-label="Messages" className={clsx(iconBtn, "ml-[6px]")}>
        <svg viewBox="0 0 16 16" className="h-4 w-4" aria-hidden>
          <path d="M8 2l6 12H2z" fill="#f6f0a8" stroke="#888" strokeLinejoin="round" />
          <path d="M8 6v4M8 11.500V13" stroke="#222" strokeWidth="1.300" />
        </svg>
      </button>
    </footer>
  );
}

export default function App() {
  const bar = "flex shrink-0 items-center border-b border-[#b5b5b5] shadow-[inset_0_1px_0_#fbfbfb]";
  const vGrip = "h-[30px] w-[6px] shrink-0";
  return (
    <div className="flex h-screen w-full flex-col overflow-hidden bg-[#f0f0f0] font-['DejaVu_Sans_Condensed','DejaVu_Sans',sans-serif] text-[11px] leading-[14px] text-black">
      <svg className="absolute h-0 w-0" aria-hidden>
        <defs>
          <pattern id="grip-dots" width="6" height="6" patternUnits="userSpaceOnUse">
            <path d="M1 1h2v2H1zM4 4h2v2H4z" fill="#c4c4c4" />
            <path d="M0 0h2v2H0zM3 3h2v2H3z" fill="#fdfdfd" />
            <path d="M1 1h1v1H1zM4 4h1v1H4z" fill="#d4d4d4" />
          </pattern>
        </defs>
      </svg>
      <TitleBar />
      <nav className="flex h-[23px] shrink-0 items-center border-b border-[#b5b5b5] pt-[3px] pl-[2px]">
        {MENUS.map((m) => <button key={m} type="button" className="px-[7px]">{m}</button>)}
      </nav>
      <div className={clsx(bar, "h-[39px] pl-[6px]")}>
        <Grip className={vGrip} />
        <ToolGroup tools={FILE_TOOLS} />
        <Grip className={clsx(vGrip, "ml-2")} />
        <ToolGroup tools={NAV_TOOLS} />
        <Grip className={clsx(vGrip, "ml-2")} />
        <ToolGroup tools={ATTR_TOOLS} />
        <Grip className={clsx(vGrip, "ml-2")} />
        <ToolGroup tools={HELP_TOOLS} />
      </div>
      <div className={clsx(bar, "h-[39px] pl-[6px]")}>
        <Grip className={vGrip} />
        <ToolGroup tools={EDIT_TOOLS} />
        <Grip className={clsx(vGrip, "ml-9")} />
        <ToolGroup tools={LABEL_TOOLS} />
        <Grip className={clsx(vGrip, "ml-[42px]")} />
        <Grip className={clsx(vGrip, "ml-[94px]")} />
        <ToolGroup tools={CSW_TOOLS} />
      </div>
      <div className={clsx(bar, "h-[38px] pl-[6px]")}>
        <Grip className={vGrip} />
        {SURVEY_TOOLS.map((group, i) => (
          <div key={i} className="flex items-center">
            {i > 0 && <span className="mr-px h-7 w-px bg-[#b5b5b5]" />}
            <ToolGroup tools={group} />
          </div>
        ))}
      </div>
      <div className="flex min-h-0 flex-1">
        <aside className="flex w-[52px] shrink-0 flex-col items-start border-r border-[#b5b5b5] pt-[7px]">
          <Grip className="ml-[5px] h-[5px] w-[41px] shrink-0" />
          {LAYER_TOOLS.map((t) => (
            <div key={t.label} className={clsx("flex h-[34px] w-full shrink-0 items-center", t.menu ? "justify-end pr-1" : "justify-center")}>
              <button type="button" aria-label={t.label}><Icon>{t.icon}</Icon></button>
              {t.menu && <button type="button" aria-label={`${t.label} options`} className="ml-[6px]"><DropArrow /></button>}
            </div>
          ))}
          <Grip className="mt-2 ml-[5px] h-[5px] w-[41px] shrink-0" />
          <button type="button" aria-label="Coordinate Capture" className="mt-[6px] ml-4">
            <Icon>
              <path d="M12.500 0v23M-1 13.500h23" stroke="#444" />
              <circle cx="12.500" cy="13.500" r="4" fill="none" stroke="#c03030" strokeWidth="1.400" strokeDasharray="4 2.280" strokeDashoffset="-1" />
            </Icon>
          </button>
          <button type="button" aria-label="More tools" className="mt-auto mb-1 ml-[17px]">
            <svg viewBox="0 0 7 9" className="h-[9px] w-[7px]" aria-hidden><path d="M1 .5L3.500 3 6 .5M1 4.500L3.500 7 6 4.500" fill="none" stroke="#000" strokeWidth="1.500" /></svg>
          </button>
        </aside>
        <IdentifyPanel />
        <div className="flex w-[5px] shrink-0 items-center"><Grip className="h-[177px] w-[5px]" /></div>
        <MapCanvas />
      </div>
      <StatusBar />
    </div>
  );
}
